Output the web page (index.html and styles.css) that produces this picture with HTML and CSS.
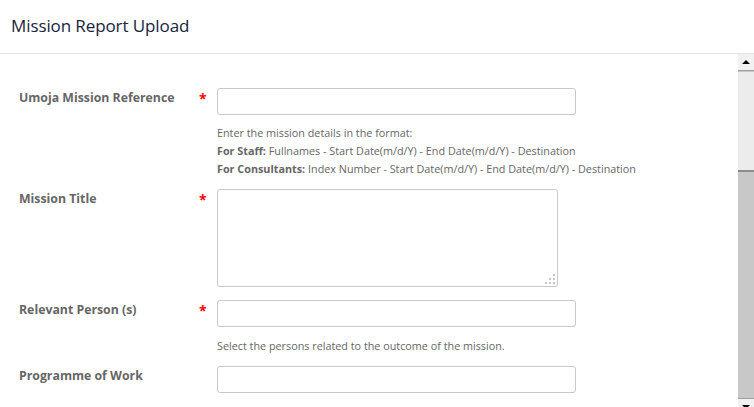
FILE: index.html
```html
<!DOCTYPE html>
<html>
<head>
<meta charset="utf-8">
<link rel="stylesheet" href="styles.css">
</head>
<body>
<div class="page">
  <header class="header">
    <h1 class="title">Mission Report Upload</h1>
  </header>
  <div class="body">
    <form class="form">
      <div class="row">
        <label class="label">Umoja Mission Reference</label>
        <span class="req">*</span>
        <div class="field">
          <input class="input" type="text">
          <div class="help">
            <div>Enter the mission details in the format:</div>
            <div><b>For Staff:</b> Fullnames - Start Date(m/d/Y) - End Date(m/d/Y) - Destination</div>
            <div><b>For Consultants:</b> Index Number - Start Date(m/d/Y) - End Date(m/d/Y) - Destination</div>
          </div>
        </div>
      </div>
      <div class="row row-ta">
        <label class="label">Mission Title</label>
        <span class="req">*</span>
        <div class="field">
          <div class="textarea">
            <svg class="grip" width="12" height="12" viewBox="0 0 12 12">
              <rect x="9" y="1" width="2" height="2" fill="#c4c4c4"/>
              <rect x="5" y="5" width="2" height="2" fill="#c4c4c4"/>
              <rect x="9" y="5" width="2" height="2" fill="#c4c4c4"/>
              <rect x="1" y="9" width="2" height="2" fill="#c4c4c4"/>
              <rect x="5" y="9" width="2" height="2" fill="#c4c4c4"/>
              <rect x="9" y="9" width="2" height="2" fill="#c4c4c4"/>
            </svg>
          </div>
        </div>
      </div>
      <div class="row row-after-ta">
        <label class="label">Relevant Person (s)</label>
        <span class="req">*</span>
        <div class="field">
          <input class="input" type="text">
          <div class="help help-single">
            <div>Select the persons related to the outcome of the mission.</div>
          </div>
        </div>
      </div>
      <div class="row">
        <label class="label">Programme of Work</label>
        <span class="req"></span>
        <div class="field">
          <input class="input" type="text">
        </div>
      </div>
    </form>
    <div class="scrollbar">
      <div class="sb-btn"><span class="arrow-up"></span></div>
      <div class="sb-thumb"></div>
      <div class="sb-track"></div>
      <div class="sb-btn"><span class="arrow-down"></span></div>
    </div>
  </div>
</div>
</body>
</html>
```

FILE: styles.css
```css
html, body {
  margin: 0;
  padding: 0;
  background: #fff;
  height: 100%;
  overflow: hidden;
}
.page {
  font-family: "Open Sans", "Noto Sans", "DejaVu Sans", sans-serif;
  color: #666;
  height: 100%;
  display: flex;
  flex-direction: column;
}
.header {
  height: 53px;
  border-bottom: 1px solid #e6e6e6;
  box-sizing: content-box;
  display: flex;
  align-items: center;
  padding-left: 11px;
}
.title {
  margin: 0;
  font-size: 17px;
  font-weight: 500;
  color: #17243c;
  position: relative;
  top: -1px;
  letter-spacing: -0.1px;
}
.body {
  flex: 1;
  display: flex;
  overflow: hidden;
}
.form {
  flex: 1;
  padding: 34px 0 0 19px;
  display: flex;
  flex-direction: column;
  gap: 12px;
}
.row {
  display: grid;
  grid-template-columns: 180px 18px 1fr;
}
.row-ta {
  margin-top: -1px;
}
.row-after-ta {
  margin-top: 1px;
}
.label {
  font-size: 12.3px;
  font-weight: 700;
  color: #666;
  padding-top: 1px;
}
.req {
  color: #ff0000;
  font-weight: 700;
  font-size: 14px;
  line-height: 16px;
  padding-top: 3px;
}
.input {
  display: block;
  box-sizing: border-box;
  width: 359px;
  height: 27px;
  border: 1px solid #c9c9c9;
  border-radius: 3px;
  margin: 0;
  padding: 0;
  background: #fff;
}
.textarea {
  box-sizing: border-box;
  width: 341px;
  height: 98px;
  border: 1px solid #c9c9c9;
  border-radius: 3px;
  position: relative;
}
.grip {
  position: absolute;
  right: 1px;
  bottom: 1px;
}
.help {
  margin-top: 9px;
  font-size: 10.8px;
  line-height: 18px;
  color: #666;
}
.help-single {
  margin-top: 10px;
  margin-bottom: -1px;
}
.help b {
  font-weight: 700;
}
.scrollbar {
  width: 16px;
  display: flex;
  flex-direction: column;
  background: #c8c8c8;
}
.sb-btn {
  height: 16px;
  background: #f1f1f1;
  border-bottom: 1px solid #a0a0a0;
  display: flex;
  align-items: center;
  justify-content: center;
  flex: none;
}
.sb-btn:last-child {
  border-bottom: 0;
  border-top: 1px solid #a0a0a0;
  margin-bottom: -8px;
}
.arrow-up {
  width: 0; height: 0;
  border-left: 4px solid transparent;
  border-right: 4px solid transparent;
  border-bottom: 4px solid #000;
}
.arrow-down {
  width: 0; height: 0;
  border-left: 4px solid transparent;
  border-right: 4px solid transparent;
  border-top: 4px solid #000;
}
.sb-thumb {
  margin-top: 1px;
  height: 98px;
  background: #ececec;
  border-bottom: 2px solid #8c8c8c;
  flex: none;
}
.sb-track {
  flex: 1;
}
```
